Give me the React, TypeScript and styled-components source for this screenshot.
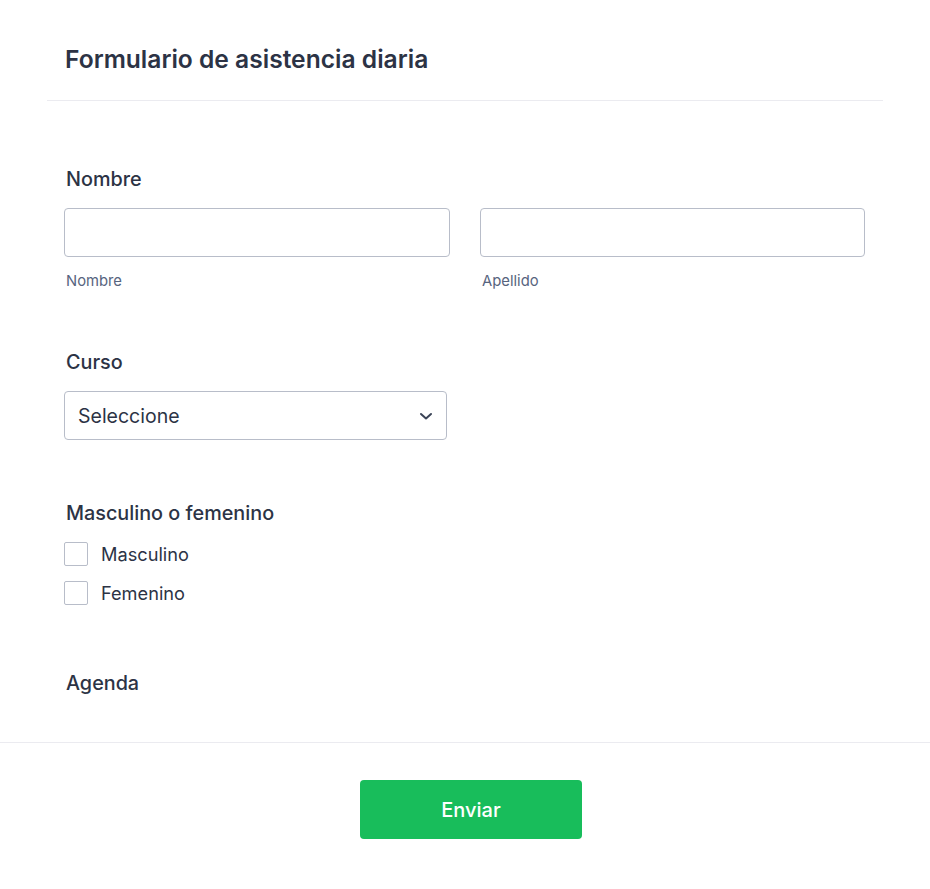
import React from "react";
import styled, { createGlobalStyle } from "styled-components";

const Global = createGlobalStyle`
  html, body { margin: 0; padding: 0; background: #fff; }
  body { font-family: Inter, "Noto Sans", sans-serif; color: #2c3345; }
  * { box-sizing: border-box; }
`;

const Page = styled.div`
  width: 930px;
  display: flex;
  flex-direction: column;
`;

const Header = styled.div`
  margin: 0 47px;
  padding: 45px 18px 26px 18px;
  border-bottom: 1px solid #ebebf0;
`;

const Title = styled.h1`
  margin: 0;
  font-size: 24.6px;
  line-height: 29px;
  font-weight: 600;
  color: #2c3345;
`;

const Body = styled.div`
  margin: 0 47px;
  padding: 66px 18px 0 17px;
  display: flex;
  flex-direction: column;
`;

const Field = styled.div<{ $gap: number }>`
  display: flex;
  flex-direction: column;
  margin-bottom: ${(p) => p.$gap}px;
`;

const Label = styled.div`
  font-size: 19.8px;
  line-height: 24px;
  font-weight: 500;
  color: #2c3345;
  padding-left: 2px;
  margin-bottom: 17px;
`;

const Row = styled.div`
  display: grid;
  grid-template-columns: 386px 385px;
  gap: 30px;
`;

const Col = styled.div`
  display: flex;
  flex-direction: column;
`;

const TextInput = styled.div`
  height: 49px;
  border: 1px solid #b8bdc9;
  border-radius: 4px;
  background: #fff;
`;

const SubLabel = styled.div`
  font-size: 14.8px;
  line-height: 18px;
  color: #57647e;
  padding-left: 2px;
  margin-top: 15px;
`;

const Select = styled.div`
  width: 383px;
  height: 49px;
  border: 1px solid #b8bdc9;
  border-radius: 4px;
  display: flex;
  align-items: center;
  justify-content: space-between;
  padding: 0 13px 0 13px;
  font-size: 19.5px;
  color: #2c3345;
`;

const Options = styled.div`
  display: flex;
  flex-direction: column;
  gap: 15px;
`;

const Option = styled.label`
  display: flex;
  align-items: center;
  gap: 13px;
  font-size: 18.2px;
  color: #2c3345;
  height: 24px;
`;

const Box = styled.span`
  width: 24px;
  height: 24px;
  border: 1px solid #b8bdc9;
  border-radius: 2px;
  background: #fff;
`;

const Footer = styled.div`
  border-top: 1px solid #ebebf0;
  display: flex;
  justify-content: center;
  padding: 37px 0 50px 0;
`;

const Button = styled.button`
  width: 222px;
  height: 59px;
  margin-left: 12px;
  background: #18bd5b;
  border: none;
  border-radius: 4px;
  color: #fff;
  font-family: Inter, "Noto Sans", sans-serif;
  font-size: 20px;
  font-weight: 500;
`;

const Chevron = () => (
  <svg width="14" height="10" viewBox="0 0 14 10" fill="none" stroke="#3b4457" strokeWidth="2" strokeLinecap="round" strokeLinejoin="round">
    <path d="M2 3l5 4.5L12 3" />
  </svg>
);

export default function App() {
  return (
    <Page>
      <Global />
      <Header>
        <Title>Formulario de asistencia diaria</Title>
      </Header>
      <Body>
        <Field $gap={60}>
          <Label>Nombre</Label>
          <Row>
            <Col>
              <TextInput />
              <SubLabel>Nombre</SubLabel>
            </Col>
            <Col>
              <TextInput />
              <SubLabel>Apellido</SubLabel>
            </Col>
          </Row>
        </Field>
        <Field $gap={61}>
          <Label>Curso</Label>
          <Select>
            <span>Seleccione</span>
            <Chevron />
          </Select>
        </Field>
        <Field $gap={66}>
          <Label>Masculino o femenino</Label>
          <Options>
            <Option><Box />Masculino</Option>
            <Option><Box />Femenino</Option>
          </Options>
        </Field>
        <Field $gap={30}>
          <Label>Agenda</Label>
        </Field>
      </Body>
      <Footer>
        <Button>Enviar</Button>
      </Footer>
    </Page>
  );
}
